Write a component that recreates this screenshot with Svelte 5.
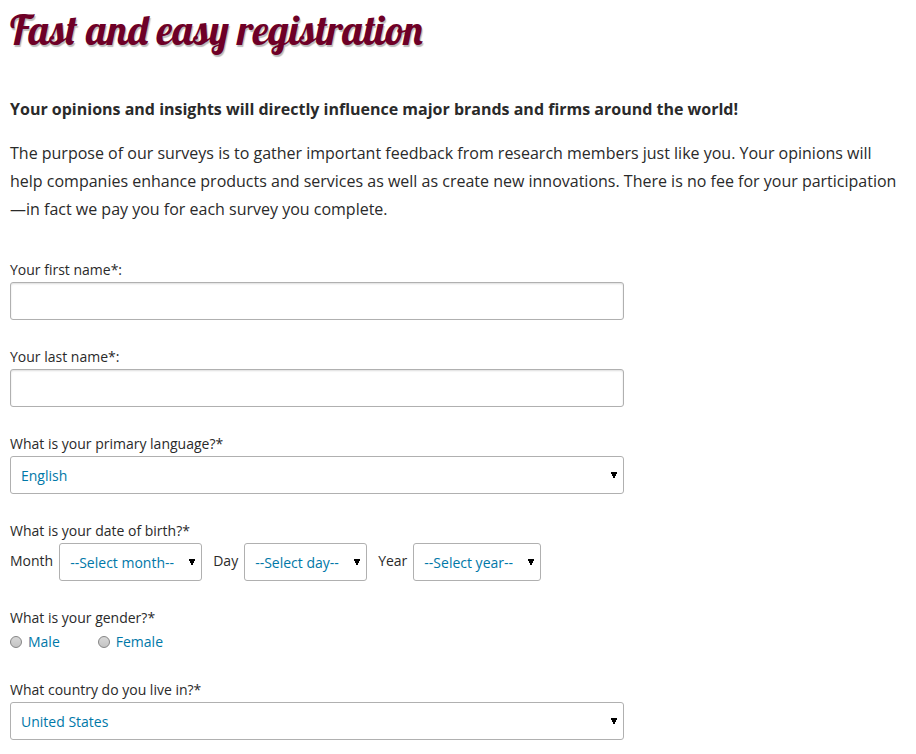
<script lang="ts">
  let firstName = $state("");
  let lastName = $state("");
  let language = $state("English");
  let month = $state("");
  let day = $state("");
  let year = $state("");
  let gender = $state("");
  let country = $state("United States");
</script>

<main>
  <h1>Fast and easy registration</h1>
  <p><strong>Your opinions and insights will directly influence major brands and firms around the world!</strong></p>
  <p>
    The purpose of our surveys is to gather important feedback from research members just like you. Your opinions will
    help companies enhance products and services as well as create new innovations. There is no fee for your
    participation—in fact we pay you for each survey you complete.
  </p>

  <form>
    <div class="field">
      <label for="first-name">Your first name*:</label>
      <input class="control" id="first-name" type="text" bind:value={firstName} />
    </div>

    <div class="field">
      <label for="last-name">Your last name*:</label>
      <input class="control" id="last-name" type="text" bind:value={lastName} />
    </div>

    <div class="field">
      <label for="language">What is your primary language?*</label>
      <select class="control" id="language" bind:value={language}>
        <option>English</option>
      </select>
    </div>

    <fieldset class="field">
      <legend>What is your date of birth?*</legend>
      <div class="dates">
        <label for="month">Month</label>
        <select class="control" id="month" bind:value={month}>
          <option value="">--Select month--</option>
        </select>
        <label for="day">Day</label>
        <select class="control" id="day" bind:value={day}>
          <option value="">--Select day--</option>
        </select>
        <label for="year">Year</label>
        <select class="control" id="year" bind:value={year}>
          <option value="">--Select year--</option>
        </select>
      </div>
    </fieldset>

    <fieldset class="field">
      <legend>What is your gender?*</legend>
      <div class="choices">
        <label><input type="radio" name="gender" value="male" bind:group={gender} />Male</label>
        <label><input type="radio" name="gender" value="female" bind:group={gender} />Female</label>
      </div>
    </fieldset>

    <div class="field">
      <label for="country">What country do you live in?*</label>
      <select class="control" id="country" bind:value={country}>
        <option>United States</option>
      </select>
    </div>
  </form>
</main>

<style>
  :global(body) {
    margin: 0;
    background: #fff;
  }
  main {
    padding: 0 16px 0 10px;
    color: #2a2a2a;
    font-family: "Open Sans", sans-serif;
    font-size: 16px;
    line-height: 28px;
  }
  h1 {
    margin: 0 0 35px;
    color: #6e0027;
    font-family: Lobster, "Liberation Serif", serif;
    font-size: 41px;
    font-weight: normal;
    line-height: 60px;
    text-shadow: 1px 2px 1px #bbb;
  }
  p { margin: 0 0 16px; }
  form {
    margin-top: 35px;
    font-size: 14px;
    line-height: 24px;
  }
  .field {
    max-width: 614px;
    margin: 0 0 25px;
    padding: 0;
    border: 0;
  }
  .field > label { display: block; }
  legend { padding: 0; }
  .control {
    display: block;
    box-sizing: border-box;
    width: 100%;
    height: 38px;
    padding: 2px 10px 0;
    border: 1px solid #b0b0b0;
    border-radius: 3px;
    background: #fff;
    color: #0078a8;
    font: inherit;
  }
  input.control { box-shadow: inset 0 1px 2px #ddd; }
  select.control {
    appearance: none;
    padding-right: 27px;
    background: #fff url("data:image/svg+xml,%3Csvg xmlns='http://www.w3.org/2000/svg' width='6' height='6'%3E%3Cpath d='M0 0h6v2H5v2H4v2H2V4H1V2H0z'/%3E%3C/svg%3E") no-repeat right 6px center;
  }
  .dates {
    display: flex;
    flex-wrap: wrap;
  }
  .dates label {
    margin-right: 6px;
    line-height: 36px;
  }
  .dates .control {
    width: auto;
    margin-right: 11px;
  }
  .choices {
    display: flex;
    gap: 38px;
    color: #0078a8;
    line-height: 23px;
  }
  .choices label {
    display: flex;
    align-items: center;
    gap: 6px;
  }
  .choices input {
    appearance: none;
    box-sizing: border-box;
    width: 12px;
    height: 12px;
    margin: 0;
    border: 1px solid #858585;
    border-radius: 50%;
    background: linear-gradient(#d8d8d8, #c4c4c4);
  }
  .choices input:checked { background: radial-gradient(#333 3px, #ddd 4px); }
</style>
